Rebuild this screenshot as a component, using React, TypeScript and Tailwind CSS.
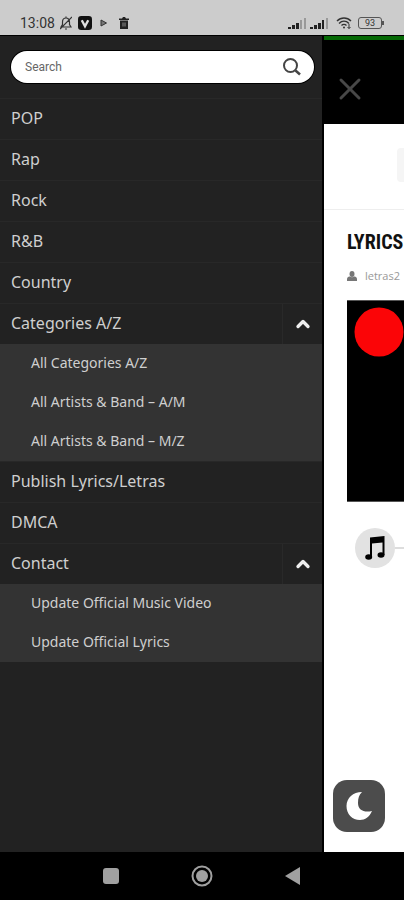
import { ChevronUp, X } from "lucide-react";

type MenuEntry = { label: string; children?: string[] };

const menu: MenuEntry[] = [
  { label: "POP" },
  { label: "Rap" },
  { label: "Rock" },
  { label: "R&B" },
  { label: "Country" },
  {
    label: "Categories A/Z",
    children: ["All Categories A/Z", "All Artists & Band – A/M", "All Artists & Band – M/Z"],
  },
  { label: "Publish Lyrics/Letras" },
  { label: "DMCA" },
  { label: "Contact", children: ["Update Official Music Video", "Update Official Lyrics"] },
];

function Signal({ strong }: { strong?: boolean }) {
  return (
    <svg className="h-3 w-5" viewBox="0 0 20 12" aria-hidden="true">
      <g fill="#222">
        <rect x="0" y="10" width="3" height="2" />
        <rect x="4" y="8" width="3" height="4" />
        <rect x="8" y="6" width="3" height="6" />
      </g>
      <rect x="12" y="3" width="2" height="9" fill={strong ? "#222" : "#999"} />
      <rect x="16" y="1" width="2" height="11" fill="#999" />
    </svg>
  );
}

function StatusBar() {
  return (
    <header className="flex h-9 shrink-0 items-end justify-between border-b border-black bg-[#cccccc] pr-5 pb-0.5 pl-5 text-[#333]">
      <div className="flex h-5 items-center">
        <span className="w-9 font-['Roboto',sans-serif] text-[14px] leading-5">13:08</span>
        <svg className="ml-1 h-4 w-3" viewBox="0 0 12 16" fill="none" stroke="#333" strokeWidth="1.2" aria-hidden="true">
          <path d="M1 12h10L9.500 9.500V7c0-2.500-1.500-4-3.500-4S2.500 4.500 2.500 7v2.500zM5 14h2M6 3V1.500M0 14L12 2" />
        </svg>
        <svg className="ml-1.5 h-3.5 w-3.5" viewBox="0 0 13 13" aria-hidden="true">
          <rect width="13" height="13" rx="3" fill="#111" />
          <path d="M3.500 4l3 5.500 3-5.500" fill="none" stroke="#ddd" strokeWidth="2.200" />
        </svg>
        <svg className="ml-2 h-2 w-2" viewBox="0 0 8 8" aria-hidden="true">
          <path d="M1 1l5.500 3L1 7z" fill="#777" stroke="#333" />
        </svg>
        <svg className="ml-2.5 h-3 w-3" viewBox="0 0 12 12" aria-hidden="true">
          <path d="M1 1.500h3L5 0h2l1 1.500h3V3H1zM2 3.500h8V12H2z" fill="#222" />
          <path d="M5 5.500v4M7 5.500v4" stroke="#aaa" strokeWidth="0.800" />
        </svg>
      </div>
      <div className="flex h-5 items-center gap-0.5">
        <Signal />
        <Signal strong />
        <svg className="ml-1 h-3 w-4" viewBox="0 0 16 12" fill="none" stroke="#333" strokeWidth="1.400" aria-hidden="true">
          <path d="M1 4c4-4 10-4 14 0M3 6.500c3-3 7-3 10 0M5.500 8.500c1.500-1.500 3.500-1.500 5 0" />
          <circle cx="8" cy="10.500" r="1" fill="#333" stroke="none" />
          <path d="M13 7v4.500M11.500 10l1.500 1.500 1.500-1.500" strokeWidth="1" />
        </svg>
        <div className="ml-1 flex items-center">
          <span className="flex h-3 w-6 items-center justify-center rounded-[3px] border border-[#555] font-['Roboto',sans-serif] text-[9px] leading-3">
            93
          </span>
          <span className="h-1 w-0.5 bg-[#555]" />
        </div>
      </div>
    </header>
  );
}

function Drawer() {
  return (
    <aside className="min-w-0 flex-1 border-r-2 border-black bg-[#222222]">
      <form className="py-[15px] pr-2 pl-[11px]" role="search">
        <div className="flex h-8 items-center rounded-full bg-white ring-1 ring-black">
          <input
            type="text"
            aria-label="Search"
            placeholder="Search"
            className="h-full min-w-0 flex-1 bg-transparent px-3.5 font-['Roboto',sans-serif] text-[12px] text-[#444] outline-none placeholder:text-[#666]"
          />
          <button type="button" aria-label="Submit search" className="pr-3">
            <svg className="h-5 w-5" viewBox="0 0 20 20" fill="none" stroke="#444" strokeWidth="2" aria-hidden="true">
              <circle cx="8.500" cy="8.500" r="6.500" />
              <path d="M13.500 13.500l4.500 4" strokeWidth="2.500" />
            </svg>
          </button>
        </div>
      </form>
      <nav className="font-['Noto_Sans',sans-serif] text-[#cfcfcf]">
        <ul>
          {menu.map((entry) => (
            <li key={entry.label}>
              <div className="flex h-[41px] border-t border-[#282828]">
                <a href="#" className="flex flex-1 items-center pb-0.5 pl-[11px] text-[16px] leading-5">
                  {entry.label}
                </a>
                {entry.children && (
                  <button
                    type="button"
                    aria-label={"Collapse " + entry.label}
                    className="flex w-10 items-center justify-center border-l border-[#292929] text-[#eeeeee]"
                  >
                    <ChevronUp size={20} strokeWidth={4} />
                  </button>
                )}
              </div>
              {entry.children && (
                <ul className="bg-[#333333]">
                  {entry.children.map((child) => (
                    <li key={child}>
                      <a href="#" className="flex h-[39px] items-center pb-0.5 pl-[31px] text-[14px] leading-5">
                        {child}
                      </a>
                    </li>
                  ))}
                </ul>
              )}
            </li>
          ))}
        </ul>
      </nav>
    </aside>
  );
}

function Page() {
  return (
    <main className="relative flex w-20 shrink-0 flex-col overflow-hidden bg-white">
      <div className="h-[88px] shrink-0 border-t-4 border-[#046804] bg-black pt-[31px] pl-2">
        <button type="button" aria-label="Close menu" className="block text-[#484848]">
          <X size={36} strokeWidth={2} />
        </button>
      </div>
      <div className="flex h-[86px] shrink-0 justify-end border-b border-[#eeeeee] pt-6">
        <div className="h-[34px] w-[7px] rounded-l-sm bg-[#f5f5f5]" />
      </div>
      <article className="pl-[23px]">
        <h1 className="pt-[18px] font-['Roboto_Condensed','Liberation_Sans_Narrow',sans-serif] text-[20px] leading-7 font-bold whitespace-nowrap text-[#111]">
          LYRICS
        </h1>
        <p className="mt-2.5 flex h-5 items-center gap-2 font-['Open_Sans',sans-serif] text-[11px] text-[#999]">
          <svg className="h-2.5 w-2.5" viewBox="0 0 10 10" fill="#777" aria-hidden="true">
            <ellipse cx="5" cy="3" rx="2.500" ry="3" />
            <path d="M0 10V8c0-2 2-2.500 3-2.500 1 1 3 1 4 0 1 0 3 .5 3 2.500v2z" />
          </svg>
          letras2
        </p>
        <div className="mt-[14px] flex h-[202px] border-y border-[#555] bg-black pt-1.5 pl-[7px]">
          <svg className="h-[50px] w-[50px] shrink-0" viewBox="0 0 50 50" aria-hidden="true">
            <circle cx="25" cy="25" r="24.500" fill="#fb0507" />
          </svg>
        </div>
        <div className="mt-[26px] flex items-center pl-2">
          <span className="flex h-10 w-10 shrink-0 items-center justify-center rounded-full bg-[#e2e2e2]">
            <svg className="h-6 w-5" viewBox="0 0 20 24" aria-hidden="true">
              <path d="M5 1.500L19.500 0v19h-2V6.500L7 7.500v13H5z" fill="#000" />
              <ellipse cx="3.700" cy="21" rx="3.500" ry="2.800" />
              <ellipse cx="16" cy="19" rx="3.500" ry="2.800" />
            </svg>
          </span>
          <span className="h-0.5 flex-1 bg-[#dddddd]" />
        </div>
      </article>
      <button
        type="button"
        aria-label="Dark mode"
        className="absolute bottom-5 left-[9px] flex h-[52px] w-[52px] items-center justify-center rounded-[14px] bg-[#4c4c4c]"
      >
        <svg className="h-7 w-[26px]" viewBox="0 0 26 28" aria-hidden="true">
          <path d="M16 0C7 0 .5 6 .5 14S6 28 14 28c5 0 9.500-3 12-9-8 2-14-1-14-8C12 6 13 3 16 0z" fill="#fff" />
        </svg>
      </button>
    </main>
  );
}

function SystemNav() {
  return (
    <footer className="grid h-12 shrink-0 grid-cols-[1fr_auto_1fr] items-center gap-[72px] bg-black">
      <button type="button" aria-label="Recent apps" className="justify-self-end">
        <span className="block h-4 w-4 rounded-[3px] bg-[#a0a0a0]" />
      </button>
      <button type="button" aria-label="Home">
        <svg className="h-[22px] w-[22px]" viewBox="0 0 22 22" aria-hidden="true">
          <circle cx="11" cy="11" r="9.500" fill="none" stroke="#a0a0a0" strokeWidth="2" />
          <circle cx="11" cy="11" r="6" fill="#a0a0a0" />
        </svg>
      </button>
      <button type="button" aria-label="Back" className="justify-self-start">
        <svg className="h-[18px] w-4" viewBox="0 0 16 18" aria-hidden="true">
          <path d="M0 9L15 0v18z" fill="#a0a0a0" />
        </svg>
      </button>
    </footer>
  );
}

export default function App() {
  return (
    <div className="flex min-h-screen flex-col">
      <StatusBar />
      <div className="flex flex-1">
        <Drawer />
        <Page />
      </div>
      <SystemNav />
    </div>
  );
}
